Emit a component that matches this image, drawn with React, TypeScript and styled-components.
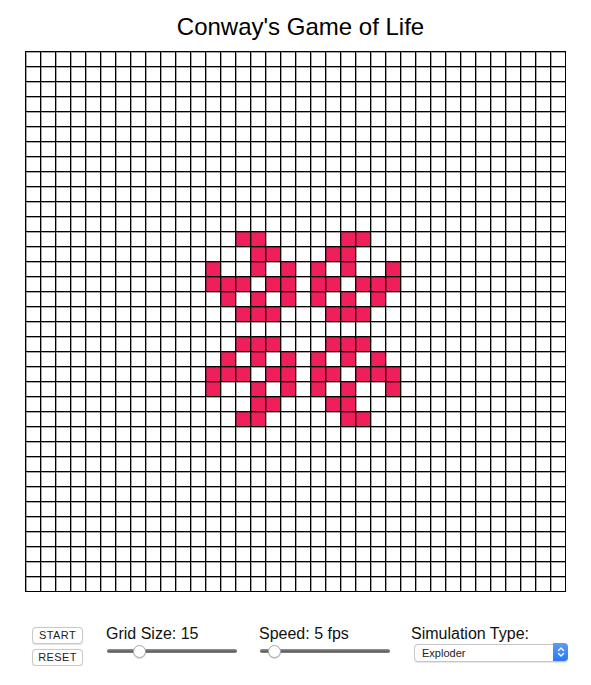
import React from "react";
import styled, { createGlobalStyle } from "styled-components";

const GlobalStyle = createGlobalStyle`
  html, body { margin: 0; padding: 0; background: #ffffff; }
  body { font-family: "Liberation Sans", Arial, sans-serif; color: #000; }
`;

const CELL = 15;
const SIZE = 36;

const ALIVE: Array<[number, number[]]> = [
  [12, [14, 15, 21, 22]],
  [13, [15, 16, 20, 21]],
  [14, [12, 15, 17, 19, 21, 24]],
  [15, [12, 13, 14, 16, 17, 19, 20, 22, 23, 24]],
  [16, [13, 15, 17, 19, 21, 23]],
  [17, [14, 15, 16, 20, 21, 22]],
  [19, [14, 15, 16, 20, 21, 22]],
  [20, [13, 15, 17, 19, 21, 23]],
  [21, [12, 13, 14, 16, 17, 19, 20, 22, 23, 24]],
  [22, [12, 15, 17, 19, 21, 24]],
  [23, [15, 16, 20, 21]],
  [24, [14, 15, 21, 22]],
];

const aliveSet = new Set<string>();
ALIVE.forEach(([r, cols]) => cols.forEach((c) => aliveSet.add(`${r}-${c}`)));

const Page = styled.div`
  width: 541px;
  margin: 0 auto;
  padding-top: 13px;
`;

const Title = styled.h1`
  margin: 0 0 10px;
  padding-left: 10px;
  font-size: 24px;
  line-height: 28px;
  font-weight: 400;
  text-align: center;
  letter-spacing: 0;
`;

const Board = styled.div`
  display: grid;
  grid-template-columns: repeat(${SIZE}, ${CELL}px);
  grid-auto-rows: ${CELL}px;
  width: ${SIZE * CELL + 1}px;
  border-left: 1px solid #000;
  border-top: 1px solid #000;
  box-sizing: border-box;
`;

const Cell = styled.div<{ $alive: boolean }>`
  box-sizing: border-box;
  width: ${CELL}px;
  height: ${CELL}px;
  border-right: 1px solid #000;
  border-bottom: 1px solid #000;
  box-shadow: inset 1px 1px 0 rgba(0, 0, 0, 0.35);
  background: ${(p) => (p.$alive ? "#f01f5b" : "#ffffff")};
`;

const Controls = styled.div`
  display: flex;
  align-items: flex-start;
  margin-top: 33px;
  padding-left: 7px;
`;

const ButtonColumn = styled.div`
  display: flex;
  flex-direction: column;
  flex-shrink: 0;
  gap: 5px;
  width: 51px;
  margin: 2px 23px 0 0;
`;

const SmallButton = styled.button`
  box-sizing: border-box;
  width: 51px;
  height: 17px;
  padding: 0;
  border: 1px solid #c9c9c9;
  border-radius: 4px;
  background: #ffffff;
  font-family: "Liberation Sans", Arial, sans-serif;
  font-size: 11px;
  letter-spacing: 0.4px;
  color: #222;
  line-height: 15px;
  box-shadow: 0 0.5px 1px rgba(0, 0, 0, 0.12);
`;

const Group = styled.div<{ $width: number }>`
  display: flex;
  flex-direction: column;
  flex-shrink: 0;
  width: ${(p) => p.$width}px;
`;

const Label = styled.label`
  font-size: 16px;
  line-height: 18px;
  color: #111;
  white-space: nowrap;
`;

const Range = styled.input`
  -webkit-appearance: none;
  appearance: none;
  width: 130px;
  height: 14px;
  margin: 1px 0 0 1px;
  padding: 0;
  background: transparent;

  &::-webkit-slider-runnable-track {
    height: 4px;
    border-radius: 2px;
    background: linear-gradient(#9a9a9a, #5e5e5e 60%, #8a8a8a);
  }
  &::-webkit-slider-thumb {
    -webkit-appearance: none;
    appearance: none;
    width: 13px;
    height: 13px;
    margin-top: -4.5px;
    border-radius: 50%;
    background: #ffffff;
    border: 1px solid #a8a8a8;
    box-sizing: border-box;
    box-shadow: 0 1px 1px rgba(0, 0, 0, 0.15);
  }
`;

const SelectWrap = styled.div`
  position: relative;
  width: 154px;
  height: 18px;
  margin: 0 0 0 3px;
`;

const Select = styled.select`
  -webkit-appearance: none;
  appearance: none;
  box-sizing: border-box;
  width: 100%;
  height: 18px;
  padding: 0 18px 0 7px;
  border: 1px solid #c6c6c6;
  border-radius: 4px;
  background: #ffffff;
  font-family: "Liberation Sans", Arial, sans-serif;
  font-size: 11px;
  color: #222;
  box-shadow: 0 0.5px 1px rgba(0, 0, 0, 0.1);
`;

const Arrow = styled.span`
  position: absolute;
  top: 0;
  right: 0;
  width: 15px;
  height: 18px;
  border-radius: 0 4px 4px 0;
  background: linear-gradient(#5a9cf8, #2c78f2);
  display: flex;
  align-items: center;
  justify-content: center;
  pointer-events: none;
`;

export default function App() {
  const cells: React.ReactNode[] = [];
  for (let r = 0; r < SIZE; r++) {
    for (let c = 0; c < SIZE; c++) {
      cells.push(<Cell key={`${r}-${c}`} $alive={aliveSet.has(`${r}-${c}`)} />);
    }
  }
  return (
    <>
      <GlobalStyle />
      <Page>
        <Title>Conway's Game of Life</Title>
        <Board>{cells}</Board>
        <Controls>
          <ButtonColumn>
            <SmallButton>START</SmallButton>
            <SmallButton>RESET</SmallButton>
          </ButtonColumn>
          <Group $width={153}>
            <Label>Grid Size: 15</Label>
            <Range type="range" min={5} max={50} defaultValue={15} readOnly />
          </Group>
          <Group $width={152}>
            <Label>Speed: 5 fps</Label>
            <Range type="range" min={1} max={60} defaultValue={5} readOnly />
          </Group>
          <Group $width={158}>
            <Label>Simulation Type:</Label>
            <SelectWrap>
              <Select defaultValue="Exploder">
                <option>Exploder</option>
                <option>Glider</option>
                <option>Random</option>
              </Select>
              <Arrow>
                <svg width="8" height="12" viewBox="0 0 8 12" fill="none" stroke="#fff" strokeWidth="1.4" strokeLinecap="round" strokeLinejoin="round">
                  <path d="M1.5 4.5 L4 2 L6.5 4.5" />
                  <path d="M1.5 7.5 L4 10 L6.5 7.5" />
                </svg>
              </Arrow>
            </SelectWrap>
          </Group>
        </Controls>
      </Page>
    </>
  );
}
